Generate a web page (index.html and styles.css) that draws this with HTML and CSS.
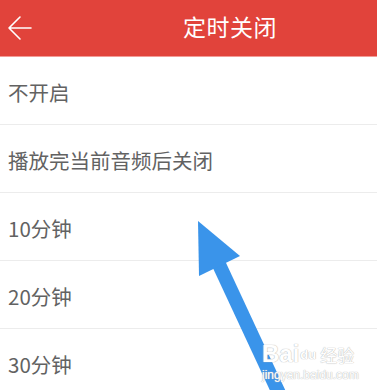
FILE: index.html
```html
<!DOCTYPE html>
<html lang="zh">
<head>
<meta charset="utf-8">
<link rel="stylesheet" href="styles.css">
</head>
<body>
<div class="screen">
  <header class="topbar">
    <svg class="back" width="26" height="26" viewBox="0 0 26 26"><path d="M24 13H2M13 2L2 13l11 11" fill="none" stroke="#fff" stroke-width="1.6" stroke-linecap="round" stroke-linejoin="round"/></svg>
    <h1 class="title">定时关闭</h1>
  </header>
  <ul class="list">
    <li class="item">不开启</li>
    <li class="item">播放完当前音频后关闭</li>
    <li class="item">10分钟</li>
    <li class="item">20分钟</li>
    <li class="item">30分钟</li>
  </ul>
  <svg class="pointer" width="377" height="390" viewBox="0 0 377 390">
    <line x1="216" y1="258" x2="284" y2="404" stroke="#3a94ea" stroke-width="14"/>
    <polygon points="198,221 240,256 199,276" fill="#3a94ea"/>
  </svg>
  <div class="watermark">
    <div class="wm-top"><span class="wm-bai">Bai</span><span class="wm-paw">du</span><span class="wm-jy">经验</span></div>
    <div class="wm-url">jingyan.baidu.com</div>
  </div>
</div>
</body>
</html>
```
FILE: styles.css
```css
* { box-sizing: border-box; margin: 0; padding: 0; }
html, body { width: 377px; height: 390px; overflow: hidden; background: #fff; }
body { font-family: "Noto Sans CJK SC", "Noto Sans", sans-serif; }
.screen { position: relative; width: 377px; height: 390px; overflow: hidden; }
.topbar {
  height: 57px;
  background: #e1433b;
  border-bottom: 1px solid #f39b96;
  display: flex;
  align-items: center;
  position: relative;
  padding-left: 7px;
}
.back { display: block; margin-top: -1px; }
.title {
  position: absolute;
  left: 183px;
  top: 10px;
  font-size: 23px;
  font-weight: 400;
  color: #fff;
  line-height: 32px;
  letter-spacing: 0.5px;
}
.list { list-style: none; }
.item {
  height: 68px;
  border-bottom: 1px solid #ececec;
  display: flex;
  align-items: center;
  padding-left: 8px;
  padding-top: 2px;
  font-size: 20.5px;
  color: #626262;
}
.pointer { position: absolute; left: 0; top: 0; }
.watermark {
  position: absolute;
  left: 262px;
  top: 340px;
  color: #fff;
  text-shadow: 0 0 1px #bbb, 0 0 1px #bbb;
  font-family: "Liberation Sans", sans-serif;
}
.wm-top { display: flex; align-items: center; height: 28px; }
.wm-bai { font-size: 24px; font-weight: 700; }
.wm-paw { font-size: 13px; font-weight: 700; margin: 0 4px 0 1px; }
.wm-jy { font-size: 17px; font-family: "Noto Sans CJK SC", sans-serif; }
.wm-url { font-size: 12px; line-height: 14px; }
```
